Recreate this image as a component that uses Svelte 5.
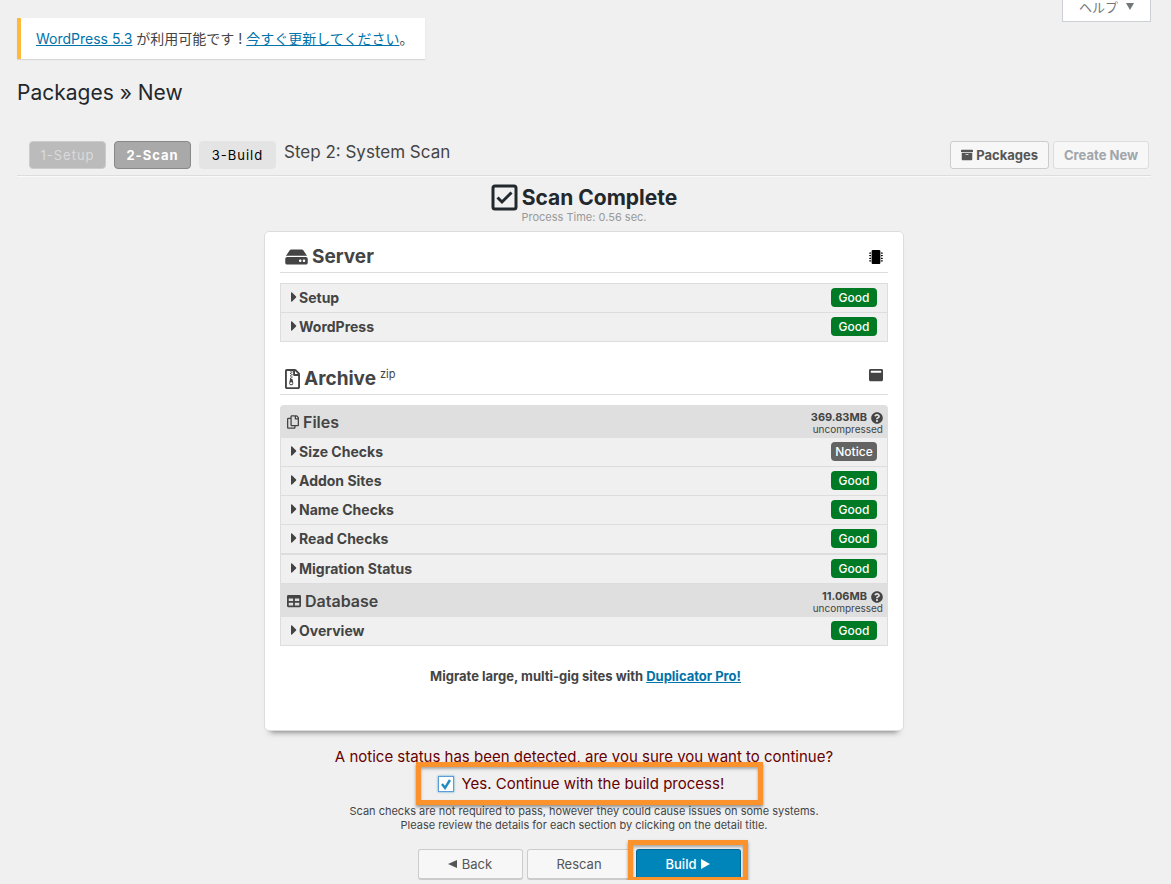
<script lang="ts">
  type Check = { name: string; status: string };

  let confirmed = true;

  const steps = ['1-Setup', '2-Scan', '3-Build'];
  const current = 1;

  const serverChecks: Check[] = [
    { name: 'Setup', status: 'Good' },
    { name: 'WordPress', status: 'Good' },
  ];

  const archiveGroups = [
    {
      title: 'Files',
      icon: 'copy',
      size: '369.83MB',
      checks: [
        { name: 'Size Checks', status: 'Notice' },
        { name: 'Addon Sites', status: 'Good' },
        { name: 'Name Checks', status: 'Good' },
        { name: 'Read Checks', status: 'Good' },
        { name: 'Migration Status', status: 'Good' },
      ],
    },
    {
      title: 'Database',
      icon: 'table',
      size: '11.06MB',
      checks: [{ name: 'Overview', status: 'Good' }],
    },
  ];

  const icons: Record<string, { w: number; d: string }> = {
    hdd: {
      w: 576,
      d: 'M576 304v96c0 26.51-21.49 48-48 48H48c-26.51 0-48-21.49-48-48v-96c0-26.51 21.49-48 48-48h480c26.51 0 48 21.49 48 48zm-48-80a79.557 79.557 0 0 1 30.777 6.165L462.25 85.374A48.003 48.003 0 0 0 422.311 64H153.689a48 48 0 0 0-39.938 21.374L17.223 230.165A79.557 79.557 0 0 1 48 224h480zm-48 96c-17.673 0-32 14.327-32 32s14.327 32 32 32 32-14.327 32-32-14.327-32-32-32zm-96 0c-17.673 0-32 14.327-32 32s14.327 32 32 32 32-14.327 32-32-14.327-32-32-32z',
    },
    zip: {
      w: 384,
      d: 'M128.3 160v32h32v-32zm64-96h-32v32h32zm-64 32v32h32V96zm64 32h-32v32h32zm177.6-30.1L286 14C277 5 264.8-.1 252.1-.1H48C21.5 0 0 21.5 0 48v416c0 26.5 21.5 48 48 48h288c26.5 0 48-21.5 48-48V131.9c0-12.7-5.1-25-14.1-34zM256 51.9l76.1 76.1H256zM336 464H48V48h79.7v16h32V48H208v104c0 13.3 10.7 24 24 24h104zM194.2 265.7c-1.1-5.6-6-9.7-11.8-9.7h-22.1v-32h-32v32l-19.7 97.1C102 385.6 126.8 416 160 416c33.1 0 57.9-30.2 51.5-62.6zm-33.9 124.4c-17.9 0-32.4-12.1-32.4-27s14.5-27 32.4-27 32.4 12.1 32.4 27-14.5 27-32.4 27zm32-198.1h-32v32h32z',
    },
    copy: {
      w: 448,
      d: 'M433.941 65.941l-51.882-51.882A48 48 0 0 0 348.118 0H176c-26.51 0-48 21.49-48 48v48H48c-26.51 0-48 21.49-48 48v320c0 26.51 21.49 48 48 48h224c26.51 0 48-21.49 48-48v-48h80c26.51 0 48-21.49 48-48V99.882a48 48 0 0 0-14.059-33.941zM266 464H54a6 6 0 0 1-6-6V150a6 6 0 0 1 6-6h74v224c0 26.51 21.49 48 48 48h96v42a6 6 0 0 1-6 6zm128-96H182a6 6 0 0 1-6-6V54a6 6 0 0 1 6-6h106v88c0 13.255 10.745 24 24 24h88v202a6 6 0 0 1-6 6zm6-256h-64V48h9.632c1.591 0 3.117.632 4.243 1.757l48.368 48.368a6 6 0 0 1 1.757 4.243V112z',
    },
    table: {
      w: 512,
      d: 'M464 32H48C21.49 32 0 53.49 0 80v352c0 26.51 21.49 48 48 48h416c26.51 0 48-21.49 48-48V80c0-26.51-21.49-48-48-48zM224 416H64v-96h160v96zm0-160H64v-96h160v96zm224 160H288v-96h160v96zm0-160H288v-96h160v96z',
    },
    help: {
      w: 512,
      d: 'M504 256c0 136.997-111.043 248-248 248S8 392.997 8 256C8 119.083 119.043 8 256 8s248 111.083 248 248zM262.655 90c-54.497 0-89.255 22.957-116.549 63.758-3.536 5.286-2.353 12.415 2.715 16.258l34.699 26.31c5.205 3.947 12.621 3.008 16.665-2.122 17.864-22.658 30.113-35.797 57.303-35.797 20.429 0 45.698 13.148 45.698 32.958 0 14.976-12.363 22.667-32.534 33.976C247.128 238.528 216 254.941 216 296v4c0 6.627 5.373 12 12 12h56c6.627 0 12-5.373 12-12v-1.333c0-28.462 83.186-29.647 83.186-106.667 0-58.002-60.165-102-116.531-102zM256 338c-25.365 0-46 20.635-46 46 0 25.364 20.635 46 46 46s46-20.636 46-46c0-25.365-20.635-46-46-46z',
    },
    archive: {
      w: 512,
      d: 'M32 448c0 17.7 14.3 32 32 32h384c17.7 0 32-14.3 32-32V160H32v288zm160-212c0-6.6 5.4-12 12-12h104c6.6 0 12 5.4 12 12v8c0 6.6-5.4 12-12 12H204c-6.6 0-12-5.4-12-12v-8zM480 32H32C14.3 32 0 46.3 0 64v48c0 8.8 7.2 16 16 16h480c8.8 0 16-7.2 16-16V64c0-17.7-14.3-32-32-32z',
    },
    caret: {
      w: 192,
      d: 'M0 384.662V127.338c0-17.818 21.543-26.741 34.142-14.142l128.662 128.662c7.81 7.81 7.81 20.474 0 28.284L34.142 398.804C21.543 411.404 0 402.48 0 384.662z',
    },
    chip: {
      w: 512,
      d: 'M416 48v416c0 26.51-21.49 48-48 48H144c-26.51 0-48-21.49-48-48V48c0-26.51 21.49-48 48-48h224c26.51 0 48 21.49 48 48zM512 106v12a6 6 0 0 1-6 6h-18v6a6 6 0 0 1-6 6h-42V88h42a6 6 0 0 1 6 6v6h18a6 6 0 0 1 6 6zm0 96v12a6 6 0 0 1-6 6h-18v6a6 6 0 0 1-6 6h-42v-48h42a6 6 0 0 1 6 6v6h18a6 6 0 0 1 6 6zm0 96v12a6 6 0 0 1-6 6h-18v6a6 6 0 0 1-6 6h-42v-48h42a6 6 0 0 1 6 6v6h18a6 6 0 0 1 6 6zm0 96v12a6 6 0 0 1-6 6h-18v6a6 6 0 0 1-6 6h-42v-48h42a6 6 0 0 1 6 6v6h18a6 6 0 0 1 6 6zM0 106v12a6 6 0 0 0 6 6h18v6a6 6 0 0 0 6 6h42V88H30a6 6 0 0 0-6 6v6H6a6 6 0 0 0-6 6zm0 96v12a6 6 0 0 0 6 6h18v6a6 6 0 0 0 6 6h42v-48H30a6 6 0 0 0-6 6v6H6a6 6 0 0 0-6 6zm0 96v12a6 6 0 0 0 6 6h18v6a6 6 0 0 0 6 6h42v-48H30a6 6 0 0 0-6 6v6H6a6 6 0 0 0-6 6zm0 96v12a6 6 0 0 0 6 6h18v6a6 6 0 0 0 6 6h42v-48H30a6 6 0 0 0-6 6v6H6a6 6 0 0 0-6 6z',
    },
    window: {
      w: 512,
      d: 'M464 32H48C21.5 32 0 53.5 0 80v352c0 26.5 21.5 48 48 48h416c26.5 0 48-21.5 48-48V80c0-26.5-21.5-48-48-48zM448 176H64V96h384z',
    },
  };
</script>

{#snippet icon(name: string, height: number)}
  <svg
    viewBox="0 0 {icons[name].w} 512"
    height={height}
    width={Math.round((icons[name].w / 512) * height)}
    fill="currentColor"
    aria-hidden="true"
  >
    <path d={icons[name].d} />
  </svg>
{/snippet}

{#snippet checkRow(check: Check)}
  <li>
    <button class="check" type="button">
      {@render icon('caret', 16)}
      <span class="check-name">{check.name}</span>
      <span class="badge" class:notice={check.status === 'Notice'}>{check.status}</span>
    </button>
  </li>
{/snippet}

<div class="wrap">
  <header class="top">
    <div class="update-nag">
      <a href="#update">WordPress 5.3</a> が利用可能です ! <a href="#now">今すぐ更新してください</a>。
    </div>
    <button class="help-tab" type="button">
      ヘルプ
      <svg width="8" height="7" viewBox="0 0 8 7" fill="currentColor" aria-hidden="true"><path d="M0 0h8L4 7z" /></svg>
    </button>
  </header>

  <h1>Packages » New</h1>

  <div class="toolbar">
    <ol class="steps">
      {#each steps as step, i}
        <li class:done={i < current} class:active={i === current}>{step}</li>
      {/each}
    </ol>
    <h2 class="step-title">Step 2: System Scan</h2>
    <div class="actions">
      <button class="btn small" type="button">{@render icon('archive', 12)}Packages</button>
      <button class="btn small" type="button" disabled>Create New</button>
    </div>
  </div>

  <main>
    <div class="result">
      <h2>
        <svg width="27" height="27" viewBox="0 0 27 27" fill="none" stroke="currentColor" aria-hidden="true">
          <rect x="2" y="2" width="23" height="23" rx="2" stroke-width="3" />
          <path d="M6.5 13.5l4.5 4.5 9.5-9.5" stroke-width="3" />
        </svg>
        Scan Complete
      </h2>
      <p>Process Time: 0.56 sec.</p>
    </div>

    <div class="card">
      <section>
        <div class="section-head">
          <h3>{@render icon('hdd', 20)}Server</h3>
          <span class="section-icon dark">{@render icon('chip', 14)}</span>
        </div>
        <ul class="checks">
          {#each serverChecks as check}
            {@render checkRow(check)}
          {/each}
        </ul>
      </section>

      <section>
        <div class="section-head">
          <h3>{@render icon('zip', 20)}Archive <sup>zip</sup></h3>
          <span class="section-icon high">{@render icon('window', 14)}</span>
        </div>
        {#each archiveGroups as group}
          <div class="group-head">
            <h4>{@render icon(group.icon, 14)}{group.title}</h4>
            <div class="size">
              <strong>{group.size} {@render icon('help', 12)}</strong>
              <span>uncompressed</span>
            </div>
          </div>
          <ul class="checks grouped">
            {#each group.checks as check}
              {@render checkRow(check)}
            {/each}
          </ul>
        {/each}
      </section>

      <p class="promo">Migrate large, multi-gig sites with <a href="#pro">Duplicator Pro!</a></p>
    </div>

    <div class="confirm">
      <p class="question">A notice status has been detected, are you sure you want to continue?</p>
      <div class="marked confirm-mark">
        <label>
          <input type="checkbox" bind:checked={confirmed} />
          Yes. Continue with the build process!
        </label>
      </div>
      <p class="hint">
        Scan checks are not required to pass, however they could cause issues on some systems.<br />
        Please review the details for each section by clicking on the detail title.
      </p>
    </div>

    <div class="buttons">
      <button class="btn large" type="button">
        <svg width="9" height="8" viewBox="0 0 9 8" fill="currentColor" aria-hidden="true"><path d="M9 0v8L0 4z" /></svg>
        Back
      </button>
      <button class="btn large" type="button">Rescan</button>
      <div class="marked build-mark">
        <button class="btn large primary" type="button">
          Build
          <svg width="9" height="10" viewBox="0 0 9 10" fill="currentColor" aria-hidden="true"><path d="M0 0v10l9-5z" /></svg>
        </button>
      </div>
    </div>
  </main>
</div>

<style>
  :global(body) {
    background: #f0f0f0;
    color: #444;
    font-family: Inter, "Noto Sans CJK JP", sans-serif;
    font-size: 13px;
    line-height: 20px;
  }

  h1, h2, h3, h4, p, ul, ol {
    margin: 0;
    padding: 0;
    font-weight: 400;
  }

  ul, ol {
    list-style: none;
  }

  a {
    color: #0073aa;
  }

  button {
    font-family: inherit;
    cursor: pointer;
  }

  svg {
    flex: none;
  }

  .wrap {
    padding: 0 20px 0 17px;
  }

  .top {
    display: flex;
    justify-content: space-between;
    align-items: flex-start;
  }

  .update-nag {
    margin-top: 18px;
    padding: 11px 12px 10px 15px;
    background: #fff;
    border-left: 4px solid #ffb93c;
    box-shadow: 0 1px 1px rgba(0, 0, 0, .1);
    font-size: 14px;
  }

  .help-tab {
    display: flex;
    align-items: center;
    gap: 8px;
    height: 22px;
    padding: 0 16px 8px;
    background: #fff;
    border: 1px solid #ccd0d4;
    border-top: 0;
    color: #72777c;
    font-size: 13px;
    line-height: 14px;
  }

  h1 {
    margin-top: 19px;
    color: #23282d;
    font-size: 21px;
    line-height: 30px;
  }

  .toolbar {
    display: flex;
    align-items: center;
    margin-top: 33px;
    padding: 0 2px 6px 12px;
    border-bottom: 1px solid #ddd;
    box-shadow: 0 1px 0 #fafafa;
  }

  .steps {
    display: flex;
    align-items: center;
    gap: 8px;
  }

  .steps li {
    box-sizing: border-box;
    min-width: 77px;
    padding: 3px 9px;
    background: #e4e4e4;
    border: 1px solid #e4e4e4;
    border-radius: 4px;
    color: #000;
    letter-spacing: 1px;
    text-align: center;
  }

  .steps .done {
    background: #bbb;
    border-color: #ccc;
    color: #dadada;
  }

  .steps .active {
    background: #a9a9a9;
    border-color: #888;
    color: #fff;
    font-weight: 700;
  }

  .step-title {
    margin: 0 auto 6px 8px;
    font-size: 17px;
    line-height: 22px;
  }

  .actions {
    display: flex;
    gap: 4px;
  }

  .btn {
    display: flex;
    align-items: center;
    justify-content: center;
    box-sizing: border-box;
    background: #f7f7f7;
    border: 1px solid #ccc;
    border-radius: 3px;
    color: #555;
    font-size: 13px;
  }

  .btn.small {
    gap: 3px;
    height: 28px;
    padding: 0 10px;
    font-weight: 700;
  }

  .btn:disabled {
    border-color: #ddd;
    color: #a0a5aa;
  }

  .btn.large {
    gap: 5px;
    width: 105px;
    height: 31px;
    border-bottom-width: 2px;
  }

  .btn.primary {
    background: #0085ba;
    border-color: #006799;
    color: #fff;
    font-weight: 500;
  }

  .result {
    display: flex;
    flex-direction: column;
    align-items: center;
    padding: 8px 0;
  }

  .result h2 {
    display: flex;
    align-items: center;
    gap: 4px;
    color: #23282d;
    font-size: 21px;
    font-weight: 700;
    line-height: 26px;
  }

  .result p {
    color: #999;
    font-size: 11px;
    line-height: 12px;
  }

  .card {
    box-sizing: border-box;
    max-width: 640px;
    margin: 0 auto;
    padding: 10px 15px 44px;
    background: #fff;
    border: 1px solid #ddd;
    border-radius: 5px;
    box-shadow: 0 7px 6px -6px #777;
  }

  .section-head {
    display: flex;
    justify-content: space-between;
    align-items: center;
    margin-bottom: 10px;
    padding: 0 5px;
    border-bottom: 1px solid #ddd;
  }

  .section-head h3 {
    display: flex;
    align-items: center;
    gap: 4px;
    font-size: 19px;
    font-weight: 700;
    line-height: 30px;
  }

  .section-icon {
    display: flex;
  }

  .section-icon.dark {
    color: #000;
  }

  .section-icon.high {
    margin-bottom: 8px;
  }

  section + section {
    margin-top: 22px;
  }

  sup {
    align-self: flex-start;
    font-size: 11px;
    font-weight: 400;
    line-height: 20px;
  }

  .checks {
    background: #f0f0f0;
    border: 1px solid #ddd;
  }

  .checks.grouped {
    border-top: 0;
  }

  .checks li + li {
    border-top: 1px solid #ddd;
  }

  .checks.grouped li + li:last-child {
    border-top-width: 2px;
  }

  .check {
    display: flex;
    align-items: center;
    width: 100%;
    height: 28px;
    padding: 0 10px 2px 10px;
    background: none;
    border: 0;
    color: #444;
    font-size: 14px;
    font-weight: 700;
    text-align: left;
  }

  .check-name {
    flex: 1;
    margin-left: 2px;
  }

  .badge {
    width: 46px;
    background: #007a24;
    border-radius: 4px;
    color: #fff;
    font-size: 12px;
    font-weight: 500;
    line-height: 19px;
    text-align: center;
  }

  .badge.notice {
    background: #636363;
  }

  .group-head {
    display: flex;
    justify-content: space-between;
    align-items: center;
    height: 33px;
    padding: 0 5px 0 7px;
    background: #dfdfdf;
  }

  .section-head + .group-head {
    border-radius: 4px 4px 0 0;
  }

  .group-head h4 {
    display: flex;
    align-items: center;
    gap: 4px;
    font-size: 16px;
    font-weight: 600;
  }

  .size {
    display: flex;
    flex-direction: column;
    align-items: flex-end;
    padding-top: 3px;
    font-size: 10px;
    line-height: 11px;
  }

  .size strong {
    display: flex;
    align-items: center;
    gap: 4px;
    font-size: 11px;
  }

  .promo {
    margin-top: 20px;
    padding-left: 3px;
    font-size: 13px;
    font-weight: 700;
    text-align: center;
  }

  .confirm {
    display: flex;
    flex-direction: column;
    align-items: center;
    margin-top: 15px;
    text-align: center;
  }

  .question, .confirm label {
    color: #600;
    font-size: 15px;
    line-height: 22px;
  }

  .confirm label {
    display: flex;
    align-items: center;
    gap: 8px;
    min-width: 293px;
    padding: 5px 0 9px;
  }

  .confirm input {
    appearance: none;
    box-sizing: border-box;
    width: 16px;
    height: 16px;
    margin: 0;
    background: #fff;
    border: 1px solid #5b9dd9;
    box-shadow: 0 0 2px rgba(30, 140, 190, .8);
  }

  .confirm input:checked {
    background: #fff url("data:image/svg+xml,%3Csvg xmlns='http://www.w3.org/2000/svg' viewBox='0 0 14 14'%3E%3Cpath d='M3 7l3 4 5-8' fill='none' stroke='%231e8cbe' stroke-width='2.4'/%3E%3C/svg%3E") center / 14px;
  }

  .hint {
    font-size: 11px;
    line-height: 14px;
  }

  .buttons {
    display: flex;
    justify-content: center;
    gap: 4px;
    margin-top: 17px;
    padding-right: 10px;
  }

  /* orange frame drawn over whatever it surrounds */
  .marked {
    position: relative;
  }

  .marked::after {
    content: "";
    position: absolute;
    border: 5px solid #fb922b;
    box-shadow: 0 2px 3px rgba(0, 0, 0, .4), inset 0 2px 3px rgba(0, 0, 0, .3);
    pointer-events: none;
  }

  .confirm-mark::after {
    inset: -6px -32px -1px -22px;
  }

  .build-mark::after {
    inset: -9px -7px -2px -8px;
  }
</style>
